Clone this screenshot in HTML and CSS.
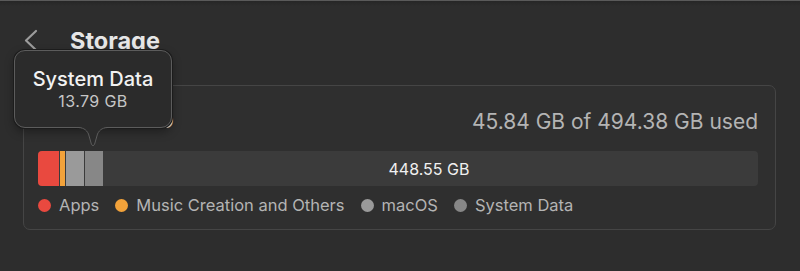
FILE: index.html
```html
<!DOCTYPE html>
<html lang="en">
<head>
    <meta charset="UTF-8">
    <meta name="viewport" content="width=device-width, initial-scale=1.0">
    <title>Storage</title>
    <link rel="stylesheet" href="styles.css">
</head>
<body>
    <div class="window">
        <div class="titlebar">
            <svg class="back" width="16" height="24" viewBox="0 0 16 24">
                <path d="M13 3 L3 12.5 L13 22" fill="none" stroke="#9c9c9c" stroke-width="2.2" stroke-linecap="round" stroke-linejoin="round"/>
            </svg>
            <h1>Storage</h1>
        </div>

        <div class="card">
            <div class="card-head">
                <h2>Macintosh HD</h2>
                <span class="used">45.84 GB of 494.38 GB used</span>
            </div>
            <div class="bar">
                <span class="seg apps" style="width: 21px"></span>
                <span class="seg music" style="width: 5px"></span>
                <span class="seg macos" style="width: 18px"></span>
                <span class="seg system" style="width: 18px"></span>
                <span class="free">448.55 GB</span>
            </div>
            <ul class="legend">
                <li><span class="dot apps"></span>Apps</li>
                <li><span class="dot music"></span>Music Creation and Others</li>
                <li><span class="dot macos"></span>macOS</li>
                <li><span class="dot system"></span>System Data</li>
            </ul>
        </div>

        <div class="tooltip">
            <div class="tip-title">System Data</div>
            <div class="tip-size">13.79 GB</div>
            <svg class="tip-arrow" width="34" height="21" viewBox="0 0 34 21">
                <path d="M0 0 C7 0 10 2 12.5 7 L15.5 17.5 Q17 20 18.5 17.5 L21.5 7 C24 2 27 0 34 0 Z" fill="#2b2b2b"/>
                <path d="M0 0.5 C7 0.5 10 2 12.5 7 L15.5 17.5 Q17 20 18.5 17.5 L21.5 7 C24 2 27 0.5 34 0.5" fill="none" stroke="#5c5c5c" stroke-width="1"/>
            </svg>
        </div>
    </div>
</body>
</html>
```

FILE: styles.css
```css
body {
    margin: 0;
    background-color: #2d2d2d;
    font-family: Inter, 'Liberation Sans', sans-serif;
    color: #b9b9b9;
}
.window {
    position: relative;
    height: 271px;
    border-top: 1px solid #5a5a5a;
    box-sizing: border-box;
    background: linear-gradient(#262626, #2d2d2d 5px);
    overflow: hidden;
}
.titlebar {
    display: flex;
    align-items: center;
    height: 84px;
    padding-left: 23px;
    box-sizing: border-box;
    padding-bottom: 6px;
}
.back {
    margin-right: 31px;
}
h1 {
    margin: 0;
    font-size: 23.5px;
    font-weight: 700;
    color: #e6e6e6;
}
.card {
    margin: 0 24px 0 23px;
    border: 1px solid #454545;
    border-radius: 7px;
    background-color: #2f2f2f;
    padding: 22px 17px 14px 14px;
}
.card-head {
    display: flex;
    justify-content: space-between;
    align-items: center;
    height: 26px;
}
h2 {
    margin: 0;
    font-size: 20px;
    font-weight: 600;
    color: #e6e6e6;
}
.used {
    font-size: 21px;
    color: #b4b4b4;
}
.bar {
    position: relative;
    display: flex;
    height: 35px;
    margin-top: 17px;
    background-color: #3b3b3b;
    border-radius: 4px;
    overflow: hidden;
}
.seg {
    height: 100%;
    margin-right: 1px;
}
.apps {
    background-color: #e9493f;
}
.music {
    background-color: #f2a23a;
}
.macos {
    background-color: #9a9a9a;
}
.system {
    background-color: #878787;
}
.free {
    flex: 1;
    display: flex;
    align-items: center;
    justify-content: center;
    font-size: 16px;
    color: #f0f0f0;
    padding-right: 4px;
}
.legend {
    list-style: none;
    display: flex;
    gap: 16px;
    margin: 9px 0 0 0;
    padding: 0;
    height: 20px;
    align-items: center;
}
.legend li {
    display: flex;
    align-items: center;
    font-size: 16.5px;
    color: #b4b4b4;
}
.dot {
    width: 13px;
    height: 13px;
    border-radius: 50%;
    margin-right: 8px;
}
.tooltip {
    position: absolute;
    left: 14px;
    top: 49px;
    width: 158px;
    height: 78px;
    box-sizing: border-box;
    border: 1px solid #5c5c5c;
    border-radius: 11px;
    background-color: #2b2b2b;
    box-shadow: 0 0 0 1px #1c1c1c, 0 4px 10px rgba(0, 0, 0, 0.35);
    text-align: center;
    padding-top: 16px;
}
.tip-title {
    font-size: 20px;
    font-weight: 500;
    color: #f2f2f2;
    line-height: 24px;
}
.tip-size {
    font-size: 16px;
    letter-spacing: 0.4px;
    color: #c6c6c6;
    line-height: 20px;
    margin-top: 0;
}
.tip-arrow {
    position: absolute;
    left: 61px;
    top: 76px;
}
```
